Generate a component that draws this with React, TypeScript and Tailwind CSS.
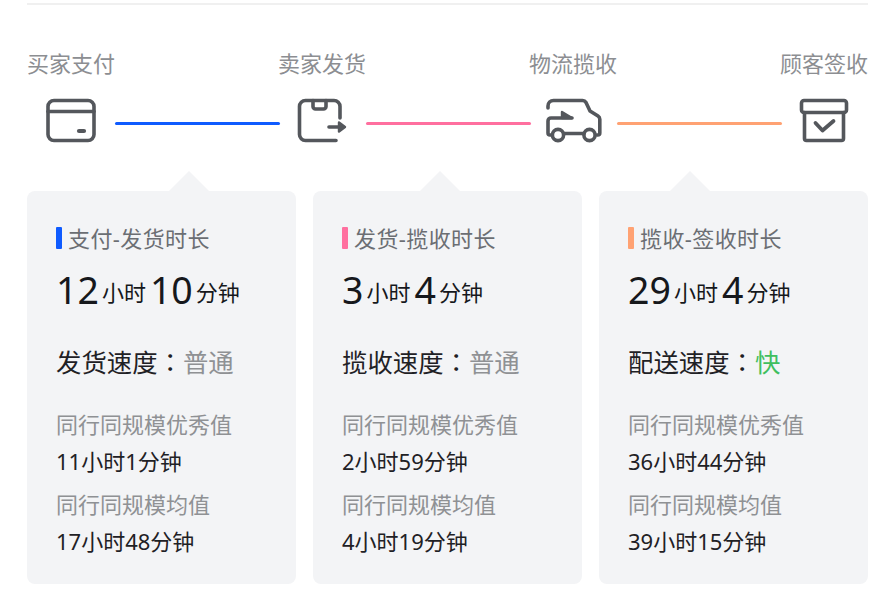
import type { ReactNode } from 'react';

const stroke = '#54575c';

function IconBase({ children }: { children: ReactNode }) {
  return (
    <svg width="58" height="48" viewBox="0 0 58 48" fill="none" stroke={stroke} strokeWidth="3.6" strokeLinecap="round" strokeLinejoin="round">
      {children}
    </svg>
  );
}

const icons = {
  pay: (
    <IconBase>
      <rect x="6" y="3.5" width="46" height="40" rx="6" />
      <path d="M6 14.500h46" />
      <path d="M37 34h5" strokeWidth="4.200" />
    </IconBase>
  ),
  ship: (
    <IconBase>
      <path d="M47 21V9.500a6 6 0 0 0-6-6H12.500a6 6 0 0 0-6 6v28a6 6 0 0 0 6 6H43" />
      <path d="M20 3.500v6a2.500 2.500 0 0 0 2.500 2.500h8a2.500 2.500 0 0 0 2.500-2.500v-6" />
      <path d="M36 30h10" />
      <path d="M46 25.500l6 4.500-6 4.500z" fill={stroke} strokeWidth="2.400" />
    </IconBase>
  ),
  truck: (
    <IconBase>
      <path d="M4 11V9a5.500 5.500 0 0 1 5.500-5.500h29a4 4 0 0 1 3.500 2l4 8.500 8 5a4 4 0 0 1 1.800 3.200V36a2 2 0 0 1-2 2h-1" />
      <path d="M40 36.500H20" />
      <path d="M7 38H6a2 2 0 0 1-2-2V24a3 3 0 0 1 3-3h21" />
      <path d="M18 15l10 6H18z" fill={stroke} strokeWidth="2.400" />
      <circle cx="14" cy="38" r="5.600" />
      <circle cx="45.500" cy="38" r="5.600" />
    </IconBase>
  ),
  archive: (
    <IconBase>
      <rect x="6.500" y="3.500" width="45" height="12" rx="2.500" />
      <path d="M9.500 15.500V41.500a2 2 0 0 0 2 2h35a2 2 0 0 0 2-2V15.500" />
      <path d="M20.500 26l7 7.500 11-9.500" strokeWidth="3.800" />
    </IconBase>
  ),
};

function Step({ label, icon }: { label: string; icon: ReactNode }) {
  return (
    <div className="flex flex-col items-center w-[88px] shrink-0">
      <span className="text-[22px] leading-[26px] text-[#8c8e92] whitespace-nowrap">{label}</span>
      <div className="mt-[21px] h-[48px] flex items-center justify-center">{icon}</div>
    </div>
  );
}

function Connector({ color }: { color: string }) {
  return <div className={`w-[165px] shrink-0 h-[3px] mt-[72px] -mr-[2px] rounded-full ${color}`} />;
}

type CardData = {
  bar: string;
  arrow: string;
  title: string;
  big: [string, string];
  speedLabel: string;
  speed: string;
  speedColor: string;
  best: string;
  avg: string;
};

const cards: CardData[] = [
  { bar: 'bg-[#0f5bff]', arrow: 'left-[142px]', title: '支付-发货时长', big: ['12', '10'], speedLabel: '发货速度', speed: '普通', speedColor: 'text-[#8f9194]', best: '11小时1分钟', avg: '17小时48分钟' },
  { bar: 'bg-[#ff6f9f]', arrow: 'left-[107px]', title: '发货-揽收时长', big: ['3', '4'], speedLabel: '揽收速度', speed: '普通', speedColor: 'text-[#8f9194]', best: '2小时59分钟', avg: '4小时19分钟' },
  { bar: 'bg-[#ffa273]', arrow: 'left-[71px]', title: '揽收-签收时长', big: ['29', '4'], speedLabel: '配送速度', speed: '快', speedColor: 'text-[#3fbf5f]', best: '36小时44分钟', avg: '39小时15分钟' },
];

function Card({ data }: { data: CardData }) {
  return (
    <div className="relative flex-1 h-[393px] bg-[#f3f4f6] rounded-[8px] pl-[29px] pt-[32px]">
      {/* arrow on top of the card */}
      <div className={`absolute -top-[20px] ${data.arrow} w-0 h-0 border-l-[20px] border-r-[20px] border-b-[20px] border-l-transparent border-r-transparent border-b-[#f3f4f6]`} />
      <div className="flex items-center h-[30px]">
        <span className={`w-[6px] h-[22px] rounded-[1px] mr-[6px] ${data.bar}`} />
        <span className="text-[22px] tracking-[0.4px] text-[#6b6e73]">{data.title}</span>
      </div>
      <div className="flex items-baseline mt-[14px] h-[46px] text-[#16181c]">
        <span className="text-[37.5px] leading-[46px]">{data.big[0]}</span>
        <span className="text-[22px] ml-[3px] mr-[4px] -translate-y-[3px]">小时</span>
        <span className="text-[37.5px] leading-[46px]">{data.big[1]}</span>
        <span className="text-[22px] ml-[3px] -translate-y-[3px]">分钟</span>
      </div>
      <div className="mt-[32px] text-[25.4px] leading-[32px] text-[#1f2125]">
        {data.speedLabel}
        <span className="font-['Noto_Sans_CJK_TC',sans-serif]">：</span>
        <span className={data.speedColor}>{data.speed}</span>
      </div>
      <div className="mt-[31px] text-[22px] leading-[30px] text-[#8f9194]">同行同规模优秀值</div>
      <div className="mt-[7px] text-[22px] leading-[30px] text-[#1f2125]">{data.best}</div>
      <div className="mt-[13px] text-[22px] leading-[30px] text-[#8f9194]">同行同规模均值</div>
      <div className="mt-[7px] text-[22px] leading-[30px] text-[#1f2125]">{data.avg}</div>
    </div>
  );
}

export default function App() {
  return (
    <div className="w-[893px] h-[615px] bg-white overflow-hidden pt-[3px] pl-[27px] pr-[25px] font-['Noto_Sans','Noto_Sans_CJK_SC',sans-serif]">
      <div className="h-[2px] bg-[#f0f0f0]" />
      <div className="flex items-start mt-[45px]">
        <Step label="买家支付" icon={icons.pay} />
        <Connector color="bg-[#0f5bff]" />
        <Step label="卖家发货" icon={icons.ship} />
        <Connector color="bg-[#ff6f9f]" />
        <Step label="物流揽收" icon={icons.truck} />
        <Connector color="bg-[#ffa273]" />
        <Step label="顾客签收" icon={icons.archive} />
      </div>
      <div className="flex gap-[17px] mt-[46px]">
        {cards.map((c) => (
          <Card key={c.title} data={c} />
        ))}
      </div>
    </div>
  );
}
